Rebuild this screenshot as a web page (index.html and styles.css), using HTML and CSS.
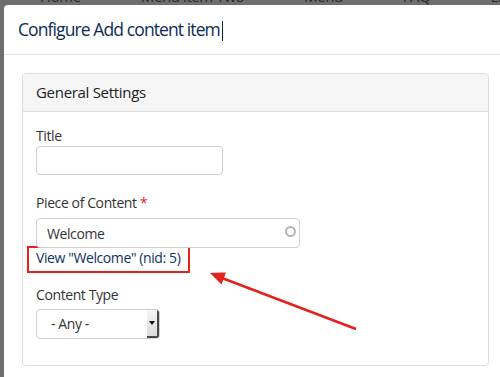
FILE: index.html
```html
<!DOCTYPE html>
<html lang="en">
<head>
    <meta charset="UTF-8">
    <title>Configure Add content item</title>
    <link rel="stylesheet" href="styles.css">
</head>
<body>
    <div class="backdrop">
        <ul class="menu">
            <li>Home</li>
            <li>Menu item Two</li>
            <li>Menu</li>
            <li>FAQ</li>
            <li>Landing Page menu item</li>
        </ul>
    </div>

    <div class="dialog">
        <div class="dialogHead">
            <h1 class="dialogTitle">Configure Add content item<span class="caret"></span></h1>
        </div>

        <div class="dialogBody">
            <section class="panel">
                <div class="panelHead">General Settings</div>
                <div class="panelBody">
                    <div class="field fieldTitle">
                        <label for="title">Title</label>
                        <input class="textInput short" type="text" id="title">
                    </div>

                    <div class="field fieldContent">
                        <label for="piece">Piece of Content <span class="required">*</span></label>
                        <div class="autocomplete">
                            <input class="textInput wide" type="text" id="piece" value="Welcome">
                            <span class="throbber"></span>
                        </div>
                        <div class="description">
                            <a class="viewLink" href="#">View "Welcome" (nid: 5)</a>
                        </div>
                    </div>

                    <div class="field fieldType">
                        <label>Content Type</label>
                        <div class="selectBox">
                            <span class="selectValue">- Any -</span>
                            <span class="selectButton"></span>
                        </div>
                    </div>
                </div>
            </section>
        </div>
    </div>

    <!-- annotation arrow pointing at the link -->
    <svg class="annotation" width="500" height="377" viewBox="0 0 500 377">
        <line x1="356" y1="329" x2="222" y2="278" stroke="#e3231b" stroke-width="2.5"/>
        <polygon points="210,273 226,272.5 221.5,284.5" fill="#e3231b"/>
    </svg>
</body>
</html>
```

FILE: styles.css
```css
html, body {
    height: 377px;
}

body {
    margin: 0;
    background-color: #6e6e6e;
    overflow: hidden;
    font-family: "Open Sans", "Liberation Sans", sans-serif;
    letter-spacing: -0.4px;
    color: #333;
}

.backdrop {
    height: 5px;
    overflow: hidden;
}

.menu {
    display: flex;
    gap: 60px;
    margin: -13px 0 0 40px;
    padding: 0;
    list-style: none;
    font-size: 15px;
    line-height: 18px;
    color: #2a2a2a;
    white-space: nowrap;
}

.dialog {
    margin-left: 4px;
    height: 372px;
    background-color: #fff;
    border-top-left-radius: 4px;
}

.dialogHead {
    height: 49px;
    padding-left: 14px;
    border-bottom: 1px solid #e4e4e4;
}

.dialogTitle {
    margin: 0;
    font-size: 17.5px;
    font-weight: normal;
    letter-spacing: -0.9px;
    line-height: 49px;
    color: #0f2b55;
}

.caret {
    display: inline-block;
    width: 1px;
    height: 20px;
    margin-left: 2px;
    vertical-align: -5px;
    background-color: #0f2b55;
}

.dialogBody {
    padding: 18px 0 0 18px;
}

.panel {
    width: 467px;
    box-sizing: border-box;
    border: 1px solid #dedede;
    border-radius: 4px;
}

.panelHead {
    height: 37px;
    padding-left: 13px;
    background-color: #f5f5f5;
    border-bottom: 1px solid #dedede;
    border-radius: 4px 4px 0 0;
    font-size: 15px;
    letter-spacing: -0.3px;
    line-height: 37px;
    color: #222;
}

.panelBody {
    padding: 14px 13px 26px 13px;
}

.field label {
    display: block;
    font-size: 14px;
    line-height: 20px;
    color: #333;
}

.fieldContent {
    margin-top: 18px;
}

.fieldContent label {
    margin-bottom: 5px;
}

.fieldType {
    margin-top: 12px;
}

.fieldType label {
    margin-bottom: 4px;
}

.required {
    color: #e3231b;
}

.textInput {
    display: block;
    box-sizing: border-box;
    margin: 0;
    padding: 0 10px;
    border: 1px solid #cfcfcf;
    border-radius: 4px;
    font-family: inherit;
    font-size: 14px;
    letter-spacing: -0.4px;
    color: #333;
    background-color: #fff;
}

.short {
    width: 187px;
    height: 29px;
}

.wide {
    width: 264px;
    height: 30px;
}

.autocomplete {
    position: relative;
    width: 264px;
}

.throbber {
    position: absolute;
    right: 4px;
    top: 8px;
    width: 7px;
    height: 7px;
    border: 2px solid #b4b4b4;
    border-radius: 50%;
}

.description {
    margin-top: -2px;
}

.viewLink {
    display: inline-block;
    margin-left: -9px;
    padding: 0 8px 3px 7px;
    border: 2px solid #e3231b;
    font-size: 14px;
    line-height: 20px;
    color: #0d3163;
    text-decoration: none;
}

.selectBox {
    display: flex;
    width: 124px;
    height: 30px;
    box-sizing: border-box;
    border: 1px solid #cfcfcf;
    border-radius: 4px;
    overflow: hidden;
}

.selectValue {
    flex: 1;
    padding-left: 14px;
    font-size: 14px;
    line-height: 28px;
    color: #333;
}

.selectButton {
    position: relative;
    width: 10px;
    background: linear-gradient(#f6f6f6, #dcdcdc);
    border-right: 2px solid #4a4a4a;
    border-bottom: 2px solid #4a4a4a;
}

.selectButton::after {
    content: "";
    position: absolute;
    left: 2px;
    top: 11px;
    border-left: 3px solid transparent;
    border-right: 3px solid transparent;
    border-top: 4px solid #111;
}

.annotation {
    position: absolute;
    left: 0;
    top: 0;
    pointer-events: none;
}
```
